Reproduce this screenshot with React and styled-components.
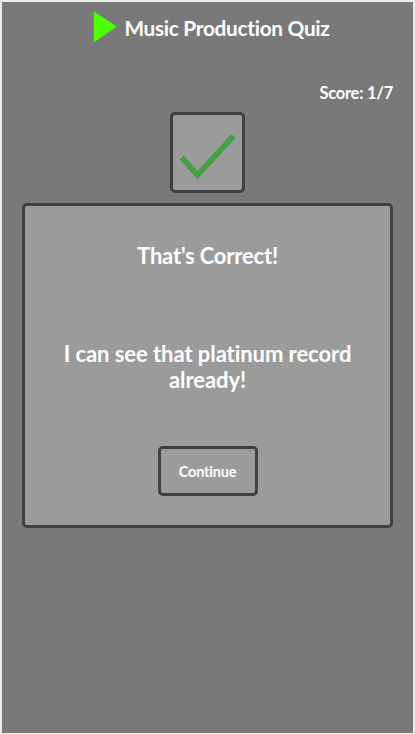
import React from "react";
import styled, { createGlobalStyle } from "styled-components";

const GlobalStyle = createGlobalStyle`
  * { box-sizing: border-box; }
  body { margin: 0; background: #ececec; font-family: Lato, "Open Sans", sans-serif; font-variant-ligatures: none; }
`;

const Page = styled.main`
  height: 734px;
  border: 2px solid #ececec;
  border-bottom-width: 1px;
  background: #797979;
  color: #fff;
  font-weight: 700;
  display: flex;
  flex-direction: column;
  align-items: center;
  padding: 0 20px;
`;

const Header = styled.header`
  display: flex;
  align-items: center;
  gap: 7px;
  height: 50px;
  padding-left: 8px;
`;

const PlayIcon = styled.svg`
  width: 24px;
  height: 32px;
  display: block;
`;

const Title = styled.h1`
  margin: 2px 0 0;
  font-size: 20.8px;
  line-height: 26px;
  font-weight: 700;
  white-space: nowrap;
  letter-spacing: ${(p) => p.$tracking};
`;

const Score = styled.p`
  align-self: flex-end;
  margin: 31px 0 9px;
  font-size: 16.5px;
  line-height: 20px;
  white-space: nowrap;
  letter-spacing: -0.25px;
`;

const ResultTile = styled.div`
  width: 75px;
  height: 81px;
  flex: none;
  border: 3px solid #404040;
  border-radius: 5px;
  background: #9b9b9b;
`;

const CheckIcon = styled.svg`
  display: block;
  width: 69px;
  height: 75px;
`;

const Panel = styled.section`
  width: 371px;
  height: 325px;
  flex: none;
  margin-top: 10px;
  border: 3px solid #404040;
  border-radius: 5px;
  background: #9b9b9b;
  display: flex;
  flex-direction: column;
  align-items: center;
  padding-top: 37px;
`;

const Message = styled.p`
  margin: 0 0 ${(p) => p.$gap};
  font-size: 22px;
  line-height: 26px;
  text-align: center;
  white-space: nowrap;
  letter-spacing: ${(p) => p.$tracking};
`;

const ContinueButton = styled.button`
  width: 100px;
  height: 50px;
  padding: 1px 0 0;
  border: 3px solid #404040;
  border-radius: 5px;
  background: #9b9b9b;
  color: #fff;
  font: 700 14.5px Lato, "Open Sans", sans-serif;
  letter-spacing: -0.2px;
`;

export default function App() {
  return (
    <>
      <GlobalStyle />
      <Page>
        <Header>
          <PlayIcon viewBox="0 0 24 32">
            <path d="M0.8 0.5 23.8 15.5 0.8 31.5Z" fill="#4dff00" />
          </PlayIcon>
          <Title $tracking="-0.29px">Music Production Quiz</Title>
        </Header>
        <Score>Score: 1/7</Score>
        <ResultTile>
          <CheckIcon viewBox="173 115 69 75">
            <path d="M181.7 157.5 197.5 175 233.5 136" fill="none" stroke="#43a047" strokeWidth="5.6" />
          </CheckIcon>
        </ResultTile>
        <Panel>
          <Message $gap="72px" $tracking="-0.2px">That's Correct!</Message>
          <Message $gap="53px" $tracking="-0.06px">
            I can see that platinum record
            <br />
            already!
          </Message>
          <ContinueButton type="button">Continue</ContinueButton>
        </Panel>
      </Page>
    </>
  );
}
